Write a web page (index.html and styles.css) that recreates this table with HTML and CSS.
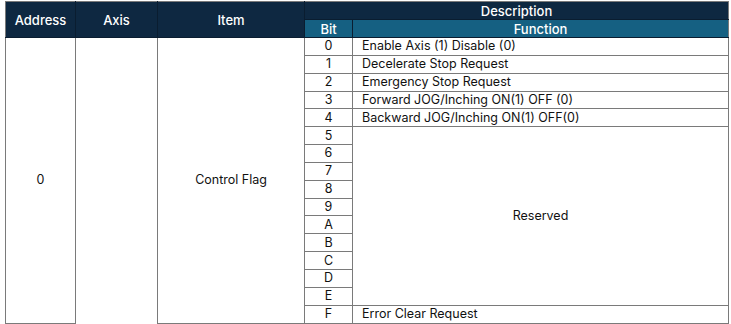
FILE: index.html
```html
<!DOCTYPE html>
<html lang="en">
<head>
  <meta charset="UTF-8">
  <title>Control Flag</title>
  <link rel="stylesheet" href="styles.css">
</head>
<body>

  <table class="regs">
    <colgroup>
      <col class="c-addr">
      <col class="c-axis">
      <col class="c-item">
      <col class="c-bit">
      <col class="c-func">
    </colgroup>
    <thead>
      <tr class="h1">
        <th rowspan="2">Address</th>
        <th rowspan="2">Axis</th>
        <th rowspan="2">Item</th>
        <th colspan="2">Description</th>
      </tr>
      <tr class="h2">
        <th class="sub">Bit</th>
        <th class="sub">Function</th>
      </tr>
    </thead>
    <tbody>
      <tr>
        <td rowspan="16" class="mid">0</td>
        <td rowspan="16" class="mid open"></td>
        <td rowspan="16" class="mid">Control Flag</td>
        <td class="bit">0</td>
        <td class="fn">Enable Axis (1) Disable (0)</td>
      </tr>
      <tr><td class="bit">1</td><td class="fn">Decelerate Stop Request</td></tr>
      <tr><td class="bit">2</td><td class="fn">Emergency Stop Request</td></tr>
      <tr><td class="bit">3</td><td class="fn">Forward JOG/Inching ON(1) OFF (0)</td></tr>
      <tr><td class="bit">4</td><td class="fn">Backward JOG/Inching ON(1) OFF(0)</td></tr>
      <tr><td class="bit">5</td><td rowspan="10" class="mid">Reserved</td></tr>
      <tr><td class="bit">6</td></tr>
      <tr><td class="bit">7</td></tr>
      <tr><td class="bit">8</td></tr>
      <tr><td class="bit">9</td></tr>
      <tr><td class="bit">A</td></tr>
      <tr><td class="bit">B</td></tr>
      <tr><td class="bit">C</td></tr>
      <tr><td class="bit">D</td></tr>
      <tr><td class="bit">E</td></tr>
      <tr><td class="bit">F</td><td class="fn">Error Clear Request</td></tr>
    </tbody>
  </table>

</body>
</html>
```

FILE: styles.css
```css
body {
  margin: 1px 0 0 5px;
  background: #fff;
  font-family: Inter, 'Liberation Sans', sans-serif;
  font-size: 12.5px;
  color: #111;
}
.regs {
  border-collapse: collapse;
  table-layout: fixed;
  width: 723px;
}
.c-addr { width: 70px; }
.c-axis { width: 82px; }
.c-item { width: 147px; }
.c-bit { width: 48px; }
.c-func { width: 376px; }

th, td {
  padding: 0;
  border: 1px solid #7a7a7a;
  line-height: 16px;
}
th {
  background: #0e2841;
  color: #fff;
  font-weight: 500;
  font-size: 13px;
  text-align: center;
  border-color: #0a1d30;
}
.h1 th { height: 17px; }
.h2 th { height: 17px; }
th.sub {
  background: #156082;
}
.h1 th:first-child { border-left-color: #7a7a7a; }
.h1 th:last-child, .h2 th:last-child { border-right-color: #7a7a7a; }
.h1 th { border-top-color: #7a7a7a; }

tbody tr { height: 17.85px; }
td.bit { text-align: center; }
td.fn { padding-left: 9px; }
td.mid { text-align: center; vertical-align: middle; }
td.open { border-bottom-color: transparent; }
```
